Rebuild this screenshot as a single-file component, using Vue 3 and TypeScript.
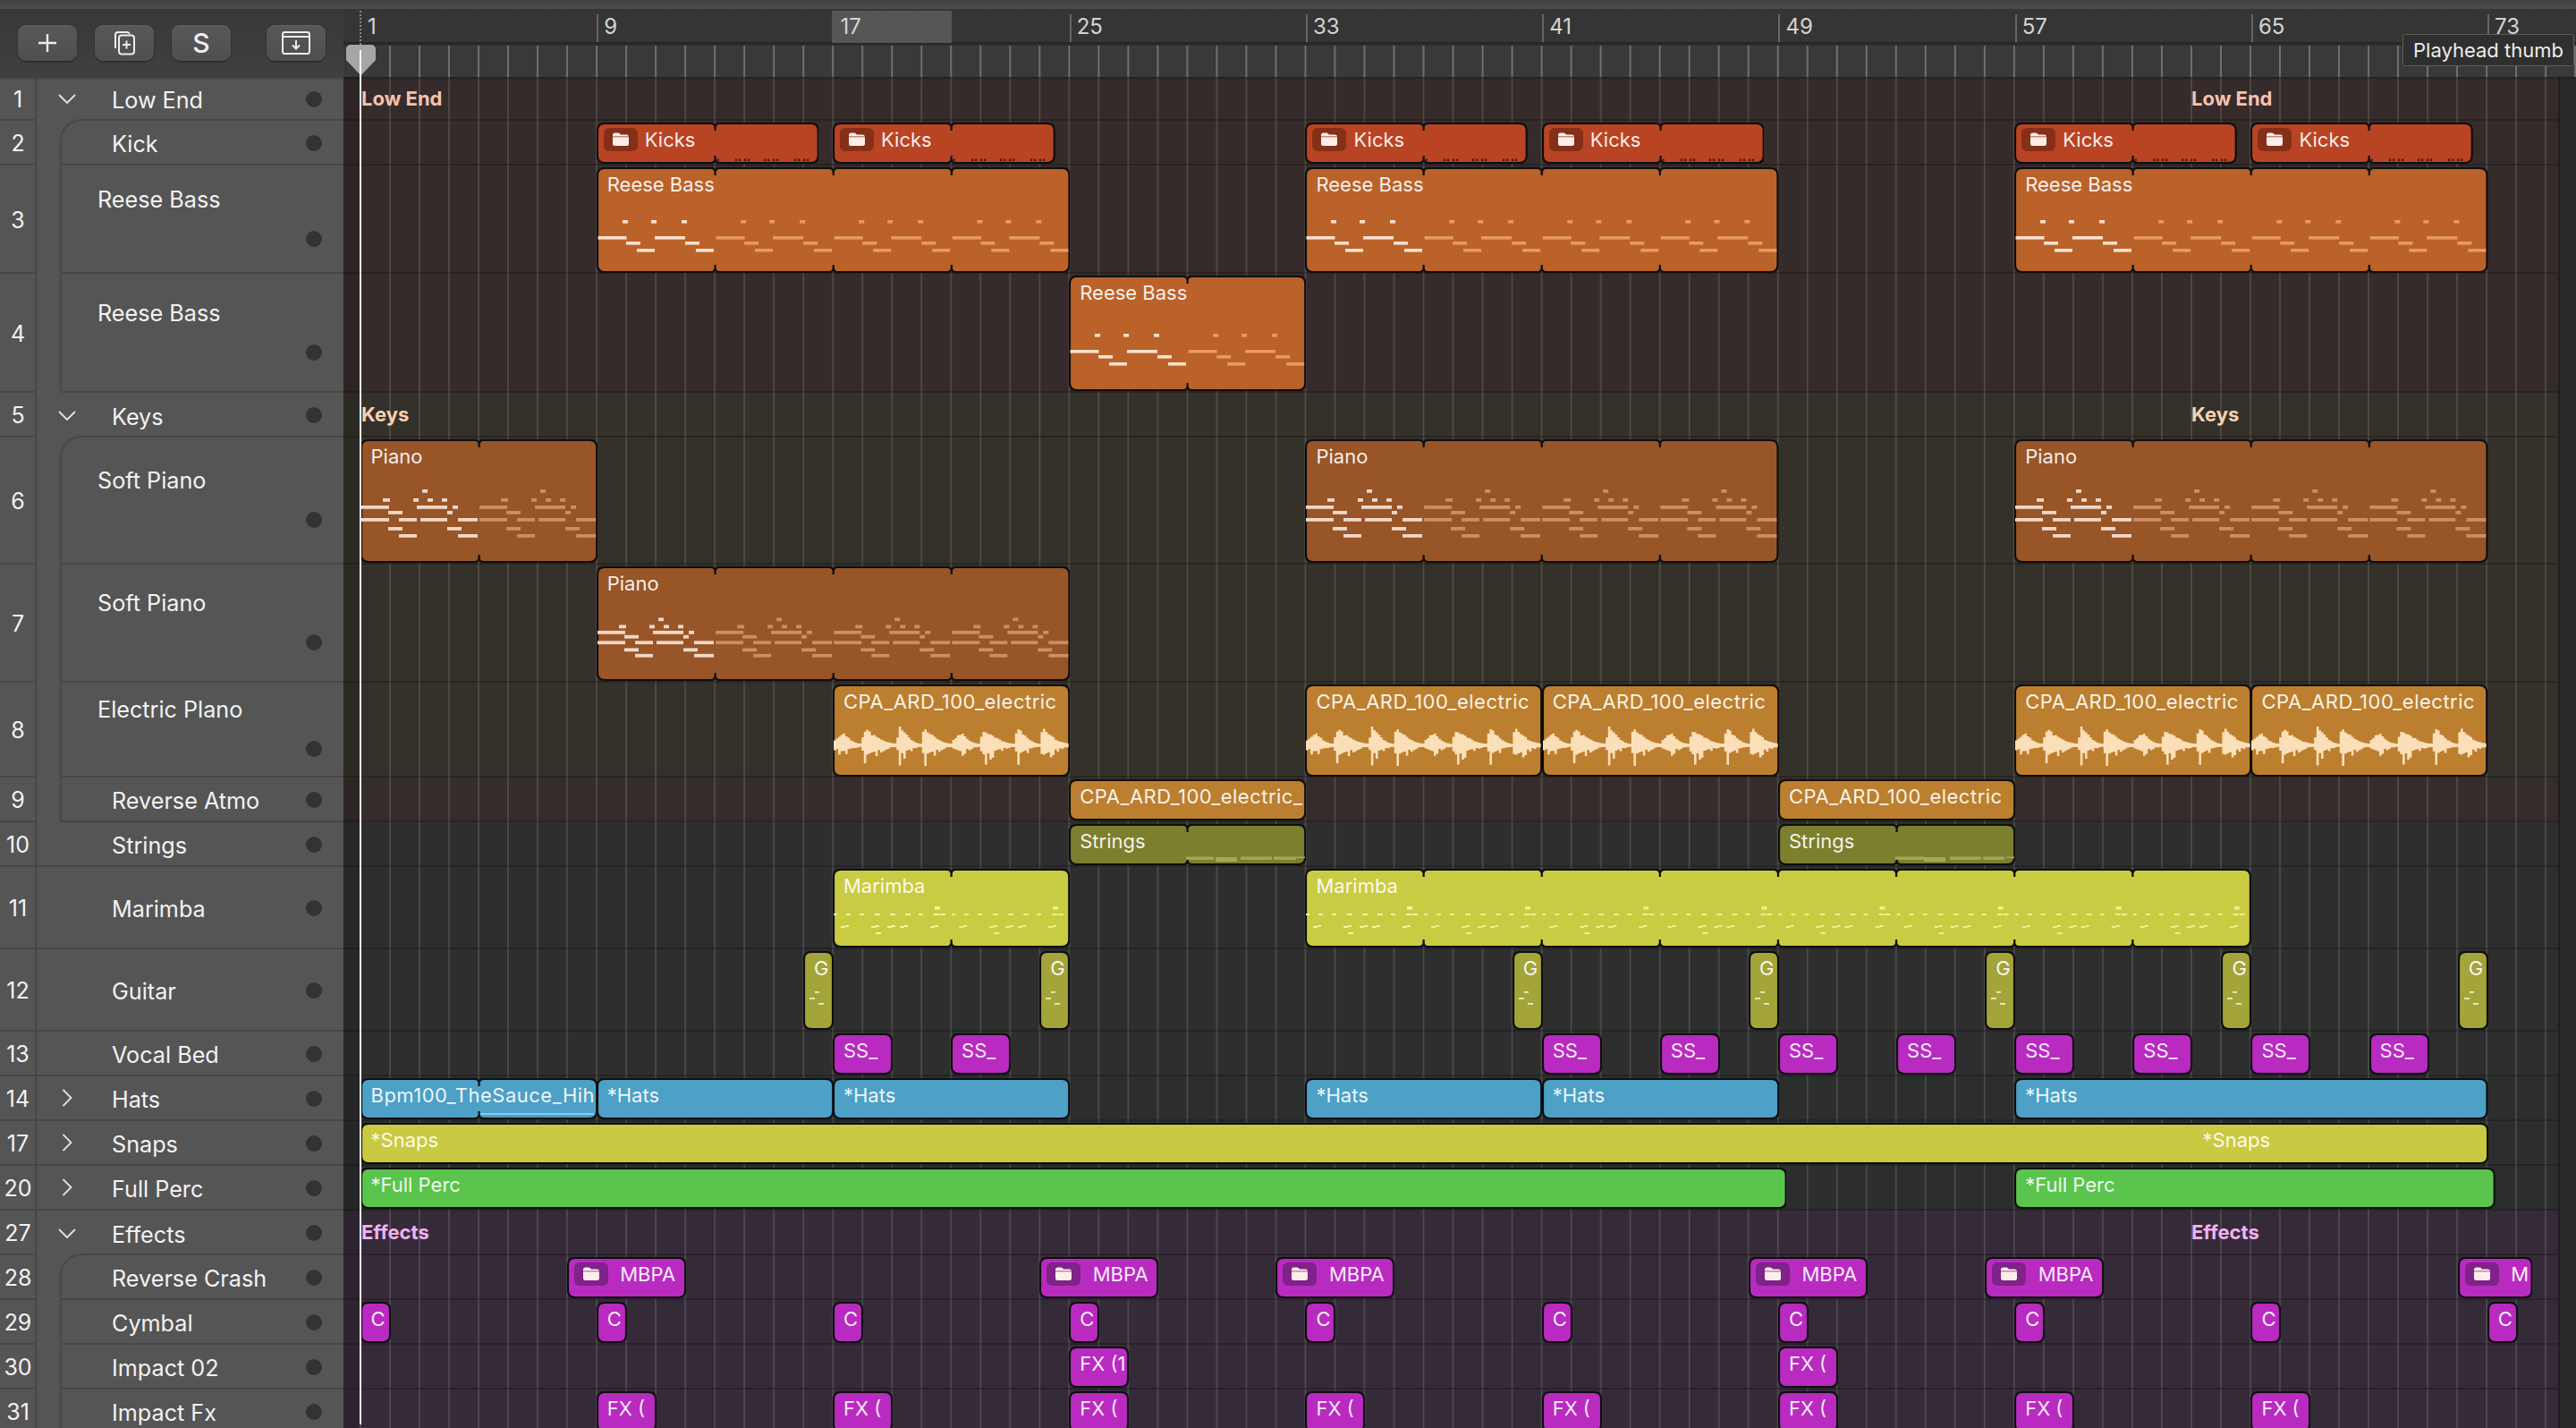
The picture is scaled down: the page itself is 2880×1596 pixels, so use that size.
<script setup lang="ts">
type Tint = 'low' | 'keys' | 'atmo' | 'plain' | 'mix' | 'fx'
type Kind = 'open' | 'closed' | 'plain' | 'first' | 'child' | 'tall' | 'tallFirst'

interface Note { x: number; y: number; w: number; h: number; c: string }
interface Region {
  left: number
  width: number
  height: number
  color: string
  label: string
  path: string
  notes: Note[]
  wave: string
  folder: string
  far: number
  key: string
}
interface GroupLabel { left: number; text: string }
interface Row {
  n: number
  name: string
  h: number
  kind: Kind
  tint: Tint
  regions: Region[]
  groups: GroupLabel[]
  labelColor: string
}

const BAR = 33.03
const ORIGIN = 19
const bx = (b: number): number => ORIGIN + (b - 1) * BAR

const C = {
  kick: '#b94424', bass: '#ba622a', piano: '#985528', cpa: '#bc7f2f', str: '#7c7f2e',
  mar: '#c9cb42', gtr: '#a3a43a', mag: '#b92bc0', hat: '#4da0c6', snap: '#c9ca42', perc: '#5bc44d',
}

function shape(w: number, h: number, joints: number[]): string {
  const r = 8
  let d = `M${r + 1} 1`
  for (const j of joints) d += `L${j - 5} 1Q${j} 1 ${j} 6L${j} 9L${j} 6Q${j} 1 ${j + 5} 1`
  d += `L${w - r - 1} 1Q${w - 1} 1 ${w - 1} ${r + 1}L${w - 1} ${h - r - 1}Q${w - 1} ${h - 1} ${w - r - 1} ${h - 1}`
  for (const j of [...joints].reverse()) d += `L${j + 5} ${h - 1}Q${j} ${h - 1} ${j} ${h - 6}L${j} ${h - 9}L${j} ${h - 6}Q${j} ${h - 1} ${j - 5} ${h - 1}`
  d += `L${r + 1} ${h - 1}Q1 ${h - 1} 1 ${h - r - 1}L1 ${r + 1}Q1 1 ${r + 1} 1Z`
  return d
}

type Raw = [number, number, number, number]
const seg = 132.12

function loop(src: Raw[], segs: number, first: string, rest: string, fy: (y: number) => number = (y) => y): Note[] {
  const out: Note[] = []
  for (let i = 0; i < segs; i++) {
    for (const [x, y, w, h] of src) {
      out.push({ x: x + i * seg, y: fy(y), w, h, c: i === 0 ? first : rest })
    }
  }
  return out
}

const bassSrc: Raw[] = [
  [29, 59, 6, 3.6], [61, 59, 6, 3.6], [95, 59, 6, 3.6],
  [1.5, 77, 32, 3.6], [65, 77, 34, 3.6],
  [33, 83, 16, 3.6], [99, 83, 16, 3.6],
  [45, 91, 20, 3.6], [111, 91, 20, 3.6],
]
const pianoSrc: Raw[] = [
  [69, 56, 6, 3.8],
  [25, 66, 8, 3.8], [59, 66, 6, 3.8], [75, 66, 6, 3.8], [91, 66, 6, 3.8],
  [1, 74, 31, 3.8], [63, 74, 34, 3.8], [103, 74, 6, 3.8],
  [31, 80, 16, 3.8], [97, 80, 6, 3.8],
  [1, 88, 31, 3.8], [43, 88, 20, 3.8], [67, 88, 30, 3.8], [109, 88, 22, 3.8],
  [31, 98, 16, 3.8], [97, 98, 16, 3.8],
  [43, 106, 20, 3.8], [109, 106, 22, 3.8],
]
const marimbaSrc: Raw[] = [
  [114, 42, 6, 3.6],
  [1, 50, 4, 2], [15, 50, 5, 2], [30, 50, 5, 2], [47, 50, 6, 2], [64, 50, 6, 2], [81, 50, 6, 2], [96, 50, 5, 2], [113, 50, 6, 2], [120, 50, 6, 2],
  [9, 64, 5, 2], [14, 63, 4, 2], [43, 64, 5, 2], [48, 63, 4, 2], [61, 64, 5, 2], [66, 63, 4, 2], [75, 64, 5, 2], [80, 63, 4, 2], [109, 64, 5, 2], [114, 63, 4, 2],
  [48, 71, 6, 2],
]
const kickDots: Note[] = [134.7, 155, 159, 165, 169, 187, 191, 197, 201, 221, 225, 231, 235]
  .map((x) => ({ x, y: 40.5, w: 2.2, h: 2.6, c: '#4a1a10' }))

function waveform(w: number, cy: number): string {
  // start, attack, length, top peak, bottom peak
  const peaks: [number, number, number, number, number][] = [
    [0, 9, 30, 13, 12], [30, 5, 40, 17, 22], [70, 2, 27, 22, 22], [97, 3, 35, 18, 23],
  ]
  const col = 2.6
  let d = ''
  let seed = 11
  const rnd = (): number => {
    seed = (seed * 9301 + 49297) % 233280
    return seed / 233280
  }
  for (let x = 1; x < w - 3; x += col) {
    const phase = (x - 1) % seg
    let best = peaks[0]
    for (const p of peaks) if (p[0] <= phase) best = p
    const dt = phase - best[0]
    const env = dt < best[1]
      ? 0.3 + 0.7 * (dt / best[1])
      : Math.pow(Math.max(0, 1 - (dt - best[1]) / (best[2] - best[1])), 1.9)
    const top = 1.8 + best[3] * env * (0.8 + rnd() * 0.25)
    const spike = rnd() > 0.6 ? 1 : 0.42
    const bot = 1.8 + best[4] * env * spike
    d += `M${x.toFixed(1)} ${(cy - top).toFixed(1)}h${col}V${(cy + bot).toFixed(1)}h-${col}Z`
  }
  return d
}

interface Opts { joints?: boolean; notes?: Note[]; wave?: boolean; folder?: string; far?: number }

function R(rowH: number, start: number, end: number, color: string, label: string, o: Opts = {}): Region {
  const left = bx(start) - 0.5
  const width = (end - start) * BAR + 1
  const height = rowH >= 100 && rowH <= 125 ? rowH - 3 : rowH - 4
  const joints: number[] = []
  if (o.joints) for (let b = start + 4; b < end - 0.01; b += 4) joints.push((b - start) * BAR + 0.5)
  return {
    left, width, height, color, label,
    path: shape(width, height, joints),
    notes: o.notes ?? [],
    wave: o.wave ? waveform(width, 68) : '',
    folder: o.folder ?? '',
    far: o.far ?? 0,
    key: `${start}-${end}-${label}`,
  }
}

const h = [49, 50, 121, 133, 50, 142, 132, 106, 50, 50, 92, 92, 50, 50, 50, 50, 50, 50, 50, 50, 50]

const kicks = (s: number): Region => R(h[1], s, s + 7.5, C.kick, 'Kicks', { joints: true, folder: '#852f19', notes: kickDots })
const bass = (s: number, e: number, off = 0): Region =>
  R(off ? h[3] : h[2], s, e, C.bass, 'Reese Bass', {
    joints: true,
    notes: loop(bassSrc, (e - s) / 4, '#fbe0cd', '#e89a60', (y) => y + off),
  })
const piano = (rowH: number, s: number, e: number, comp = false): Region =>
  R(rowH, s, e, C.piano, 'Piano', {
    joints: true,
    notes: loop(pianoSrc, (e - s) / 4, '#f0d8c8', '#c98f66', comp ? (y) => 12 + y * 0.81 : (y) => y),
  })
const cpa = (s: number): Region => R(h[7], s, s + 8, C.cpa, 'CPA_ARD_100_electric', { wave: true })
const mag = (rowH: number, s: number, e: number, label: string, o: Opts = {}): Region => R(rowH, s, e, C.mag, label, o)
const marimba = (s: number, e: number): Region =>
  R(h[10], s, e, C.mar, 'Marimba', { joints: true, notes: loop(marimbaSrc, (e - s) / 4, '#f4f59c', '#eef08a') })
const guitarNotes: Note[] = [
  { x: 13, y: 45, w: 5, h: 1.8, c: '#eeeebb' },
  { x: 7, y: 52, w: 6, h: 1.8, c: '#eeeebb' },
  { x: 17, y: 58, w: 6, h: 1.8, c: '#eeeebb' },
]
const stringsNotesA: Note[] = [
  [131, 36.5, 31, 3.4], [164, 37, 24, 5], [192, 36.5, 35, 3.4], [229, 36.5, 25, 3.4], [254, 36.5, 10, 1.6],
].map(([x, y, w, hh]) => ({ x, y, w, h: hh, c: '#a5a75a' }))
const stringsNotesB: Note[] = [
  [131, 36.5, 32, 3.4], [163, 37, 24, 5], [192, 36.5, 35, 3.4], [229, 36.5, 24, 3.4], [255, 36.5, 9, 1.6],
].map(([x, y, w, hh]) => ({ x, y, w, h: hh, c: '#a5a75a' }))

const rows: Row[] = [
  { n: 1, name: 'Low End', h: h[0], kind: 'open', tint: 'low', labelColor: '#f6c2af', groups: [{ left: 20, text: 'Low End' }, { left: 2066, text: 'Low End' }], regions: [] },
  { n: 2, name: 'Kick', h: h[1], kind: 'first', tint: 'low', labelColor: '', groups: [], regions: [9, 17, 33, 41, 57, 65].map(kicks) },
  { n: 3, name: 'Reese Bass', h: h[2], kind: 'tall', tint: 'low', labelColor: '', groups: [], regions: [bass(9, 25), bass(33, 49), bass(57, 73)] },
  { n: 4, name: 'Reese Bass', h: h[3], kind: 'tall', tint: 'low', labelColor: '', groups: [], regions: [bass(25, 33, 6)] },
  { n: 5, name: 'Keys', h: h[4], kind: 'open', tint: 'keys', labelColor: '#f6d2b0', groups: [{ left: 20, text: 'Keys' }, { left: 2066, text: 'Keys' }], regions: [] },
  { n: 6, name: 'Soft Piano', h: h[5], kind: 'tallFirst', tint: 'keys', labelColor: '', groups: [], regions: [piano(h[5], 1, 9), piano(h[5], 33, 49), piano(h[5], 57, 73)] },
  { n: 7, name: 'Soft Piano', h: h[6], kind: 'tall', tint: 'keys', labelColor: '', groups: [], regions: [piano(h[6], 9, 25, true)] },
  { n: 8, name: 'Electric Plano', h: h[7], kind: 'tall', tint: 'keys', labelColor: '', groups: [], regions: [17, 33, 41, 57, 65].map(cpa) },
  { n: 9, name: 'Reverse Atmo', h: h[8], kind: 'child', tint: 'atmo', labelColor: '', groups: [], regions: [R(h[8], 25, 33, C.cpa, 'CPA_ARD_100_electric_'), R(h[8], 49, 57, C.cpa, 'CPA_ARD_100_electric')] },
  { n: 10, name: 'Strings', h: h[9], kind: 'plain', tint: 'plain', labelColor: '', groups: [], regions: [R(h[9], 25, 33, C.str, 'Strings', { joints: true, notes: stringsNotesA }), R(h[9], 49, 57, C.str, 'Strings', { joints: true, notes: stringsNotesB })] },
  { n: 11, name: 'Marimba', h: h[10], kind: 'plain', tint: 'plain', labelColor: '', groups: [], regions: [marimba(17, 25), marimba(33, 65)] },
  { n: 12, name: 'Guitar', h: h[11], kind: 'plain', tint: 'plain', labelColor: '', groups: [], regions: [16, 24, 40, 48, 56, 64, 72].map((s) => R(h[11], s, s + 1, C.gtr, 'G', { notes: guitarNotes })) },
  { n: 13, name: 'Vocal Bed', h: h[12], kind: 'plain', tint: 'plain', labelColor: '', groups: [], regions: [17, 21, 41, 45, 49, 53, 57, 61, 65, 69].map((s) => mag(h[12], s, s + 2, 'SS_')) },
  { n: 14, name: 'Hats', h: h[13], kind: 'closed', tint: 'mix', labelColor: '', groups: [], regions: [
    R(h[13], 1, 9, C.hat, 'Bpm100_TheSauce_Hih', { joints: true, notes: [{ x: 134, y: 39, w: 127, h: 2, c: '#7dd0ef' }] }),
    R(h[13], 9, 17, C.hat, '*Hats'), R(h[13], 17, 25, C.hat, '*Hats'), R(h[13], 33, 41, C.hat, '*Hats'), R(h[13], 41, 49, C.hat, '*Hats'), R(h[13], 57, 73, C.hat, '*Hats'),
  ] },
  { n: 17, name: 'Snaps', h: h[14], kind: 'closed', tint: 'mix', labelColor: '', groups: [], regions: [R(h[14], 1, 73, C.snap, '*Snaps', { far: 2060 })] },
  { n: 20, name: 'Full Perc', h: h[15], kind: 'closed', tint: 'mix', labelColor: '', groups: [], regions: [R(h[15], 1, 49.25, C.perc, '*Full Perc'), R(h[15], 57, 73.25, C.perc, '*Full Perc')] },
  { n: 27, name: 'Effects', h: h[16], kind: 'open', tint: 'fx', labelColor: '#efb2f2', groups: [{ left: 20, text: 'Effects' }, { left: 2066, text: 'Effects' }], regions: [] },
  { n: 28, name: 'Reverse Crash', h: h[17], kind: 'first', tint: 'fx', labelColor: '', groups: [], regions: [
    ...[8, 24, 32, 48, 56].map((s) => mag(h[17], s, s + 4, 'MBPA', { folder: '#7f2289' })),
    mag(h[17], 72, 74.5, 'M', { folder: '#7f2289' }),
  ] },
  { n: 29, name: 'Cymbal', h: h[18], kind: 'child', tint: 'fx', labelColor: '', groups: [], regions: [1, 9, 17, 25, 33, 41, 49, 57, 65, 73].map((s) => mag(h[18], s, s + 1, 'C')) },
  { n: 30, name: 'Impact 02', h: h[19], kind: 'child', tint: 'fx', labelColor: '', groups: [], regions: [mag(h[19], 25, 27, 'FX (1'), mag(h[19], 49, 51, 'FX (')] },
  { n: 31, name: 'Impact Fx', h: h[20], kind: 'child', tint: 'fx', labelColor: '', groups: [], regions: [9, 17, 25, 33, 41, 49, 57, 65].map((s) => mag(h[20], s, s + 2, 'FX (')) },
]

const rulerBars = ['1', '9', '17', '25', '33', '41', '49', '57', '65', '73']
</script>

<template>
  <div class="app">
    <div class="topbar"></div>

    <div class="head">
      <div class="tools">
        <button class="tool" type="button">
          <svg width="24" height="24" viewBox="0 0 24 24"><path d="M12 2V22M2 12H22" class="ico" /></svg>
        </button>
        <button class="tool" type="button">
          <svg width="30" height="30" viewBox="0 0 30 30">
            <path d="M5 21V6a3 3 0 0 1 3-3h10a3 3 0 0 1 2.8 2" class="ico thin" />
            <rect x="9" y="6.500" width="17" height="21" rx="3" class="ico thin" />
            <path d="M17.500 12.500V21.500M13 17H22" class="ico thin" />
          </svg>
        </button>
        <button class="tool s" type="button">S</button>
        <button class="tool push" type="button">
          <svg width="34" height="28" viewBox="0 0 34 28">
            <rect x="2" y="2" width="30" height="24" rx="2.500" class="ico thin" />
            <path d="M2 7H32" class="ico thin" />
            <path d="M17 11V20M13 16.500L17 20.500L21 16.500" class="ico thin" />
          </svg>
        </button>
      </div>
      <div class="ruler">
        <div class="bars">
          <div v-for="b in rulerBars" :key="b" class="bar" :class="{ first: b === '1' }">
            <div v-if="b === '17'" class="bar-hl"></div>
            <span class="bar-num">{{ b }}</span>
          </div>
        </div>
        <div class="ticks"></div>
      </div>
    </div>

    <div class="tracks">
      <div v-for="r in rows" :key="r.n" class="row" :style="{ height: r.h + 'px' }">
        <div class="num"><span class="num-text">{{ r.n }}</span></div>
        <div class="side" :class="'k-' + r.kind">
          <span v-if="r.kind === 'open'" class="chev">
            <svg width="20" height="11" viewBox="0 0 20 11"><path d="M1 1L10 10L19 1" class="chev-line" /></svg>
          </span>
          <span v-else-if="r.kind === 'closed'" class="chev">
            <svg width="12" height="20" viewBox="0 0 12 20"><path d="M1.500 1L10.500 10L1.500 19" class="chev-line" /></svg>
          </span>
          <template v-if="r.kind.startsWith('tall')">
            <div class="tall-box">
              <span class="name tall-name">{{ r.name }}</span>
              <span class="tall-dot"><i class="dot"></i></span>
            </div>
          </template>
          <template v-else>
            <span class="name">{{ r.name }}</span>
            <i class="dot row-dot"></i>
          </template>
        </div>
        <div class="lane" :class="'t-' + r.tint">
          <span v-for="g in r.groups" :key="g.left" class="group" :style="{ left: g.left + 'px', color: r.labelColor }">{{ g.text }}</span>
          <div
            v-for="reg in r.regions"
            :key="reg.key"
            class="region"
            :style="{ left: reg.left + 'px', width: reg.width + 'px', height: reg.height + 'px' }"
          >
            <svg class="shape" :width="reg.width" :height="reg.height">
              <path :d="reg.path" :fill="reg.color" class="outline" />
              <rect v-for="(n, i) in reg.notes" :key="i" :x="n.x" :y="n.y" :width="n.w" :height="n.h" :fill="n.c" />
              <path v-if="reg.wave" :d="reg.wave" fill="#fbdfb8" />
            </svg>
            <div class="caption" :class="{ long: reg.label.length > 10 }">
              <span v-if="reg.folder" class="pill" :class="{ wide: reg.label !== 'Kicks' }" :style="{ background: reg.folder }">
                <svg width="18" height="15" viewBox="0 0 18 15">
                  <path d="M0 3a2.500 2.500 0 0 1 2.500-2.500H6c.8 0 1.300.3 1.800.8L9 2.500H15.500A2.500 2.500 0 0 1 18 4.500H0Z" class="fold" />
                  <path d="M0 5.300H18V12.500A2.500 2.500 0 0 1 15.500 15H2.500A2.500 2.500 0 0 1 0 12.500Z" class="fold" />
                </svg>
              </span>
              <span class="cap-text">{{ reg.label }}</span>
            </div>
            <span v-if="reg.far" class="far" :style="{ left: reg.far + 'px' }">{{ reg.label }}</span>
          </div>
        </div>
      </div>
    </div>

    <svg class="loop-l" width="18" height="28" viewBox="0 0 18 28"><path d="M0 0H7L17 14L7 28H0Z" /></svg>
    <svg class="loop-r" width="18" height="28" viewBox="0 0 18 28"><path d="M18 0H10L1 14L10 28H18Z" /></svg>
    <div class="dash"></div>
    <div class="playhead"></div>
    <svg class="thumb" width="35" height="35" viewBox="0 0 35 35"><path d="M6 0H29a5 5 0 0 1 5 5V17L17.500 34.500L1 17V5a5 5 0 0 1 5-5Z" /></svg>
    <div class="tip">Playhead thumb</div>
  </div>
</template>

<style scoped>
.app {
  position: relative;
  width: 2880px;
  height: 1596px;
  overflow: hidden;
  background: #2d2d2d;
  font-family: Inter, "Liberation Sans", sans-serif;
  color: #f2f2f2;
}
.topbar {
  height: 10px;
  background: linear-gradient(#424242, #4c4c4c);
}
.head {
  display: flex;
  height: 76px;
  box-shadow: 0 2px 2px rgba(0, 0, 0, 0.25);
  position: relative;
  z-index: 2;
}
.tools {
  width: 384px;
  flex: none;
  display: flex;
  align-items: center;
  gap: 20px;
  padding-left: 20px;
  box-sizing: border-box;
  background: linear-gradient(#383838, #404040);
}
.tool {
  width: 66px;
  height: 40px;
  padding: 0;
  border: 0;
  border-radius: 9px;
  background: linear-gradient(#585858, #4f4f4f);
  box-shadow: 0 1px 2px rgba(0, 0, 0, 0.45), inset 0 1px 0 rgba(255, 255, 255, 0.05);
  display: flex;
  align-items: center;
  justify-content: center;
  color: #eee;
  font-family: inherit;
}
.tool.s {
  font-size: 30px;
  font-weight: 500;
}
.tool.push {
  margin-left: 20px;
}
.ico {
  fill: none;
  stroke: #ececec;
  stroke-width: 2.4;
}
.ico.thin {
  stroke-width: 2;
}
.ruler {
  flex: 1;
  display: flex;
  flex-direction: column;
  position: relative;
}
.bars {
  height: 39px;
  display: flex;
  padding-left: 19px;
  background: #353535;
  box-sizing: border-box;
  border-bottom: 2px solid #262626;
}
.bar {
  width: 264.24px;
  flex: none;
  position: relative;
  padding-left: 6px;
  box-sizing: border-box;
  font-size: 24px;
  line-height: 36px;
  color: #d4d4d4;
  border-left: 2px solid #666;
  margin-top: 6px;
  height: 31px;
}
.bar.first {
  border-left-color: transparent;
}
.bar-num {
  position: relative;
  top: -4px;
}
.bar-hl {
  position: absolute;
  left: -3px;
  top: -4px;
  width: 134px;
  height: 36px;
  background: #565656;
}
.ticks {
  flex: 1;
  margin-top: 2px;
  background-color: #393939;
  background-image: linear-gradient(90deg, #707070 2px, transparent 2px);
  background-size: 33.03px 100%;
  background-position: 18px 0;
}
.tracks {
  display: flex;
  flex-direction: column;
}
.row {
  display: flex;
  flex: none;
  background: #555;
}
.num {
  width: 41px;
  flex: none;
  box-sizing: border-box;
  background: #555;
  border-right: 2px solid #474747;
  border-bottom: 2px solid #474747;
  display: flex;
  align-items: center;
  justify-content: center;
  font-size: 25px;
  padding-left: 1px;
}
.num-text {
  position: relative;
  top: 1px;
}
.side {
  width: 343px;
  flex: none;
  box-sizing: border-box;
  background: #555;
  display: flex;
  align-items: center;
  padding-left: 84px;
  padding-right: 24px;
  position: relative;
  justify-content: space-between;
}
.k-closed,
.k-plain {
  border-bottom: 2px solid #474747;
}
.k-first,
.k-child,
.k-tall,
.k-tallFirst {
  margin-left: 26px;
  width: 317px;
  padding-left: 56px;
  border-left: 2px solid #474747;
  border-bottom: 2px solid #474747;
}
.k-first,
.k-tallFirst {
  margin-top: -2px;
  border-top: 2px solid #474747;
  border-top-left-radius: 24px;
}
.k-tall,
.k-tallFirst {
  padding-left: 40px;
  align-items: center;
}
.chev {
  position: absolute;
  left: 22px;
  width: 24px;
  height: 24px;
  display: flex;
  align-items: center;
  justify-content: center;
}
.chev-line {
  fill: none;
  stroke: #e4e4e4;
  stroke-width: 1.800;
}
.name {
  font-size: 25.200px;
  line-height: 26px;
  padding-top: 3px;
  white-space: nowrap;
}
.name.tall-name {
  padding-top: 0;
}
.dot {
  display: block;
  width: 18px;
  height: 18px;
  border-radius: 50%;
  background: #333;
  flex: none;
}
.k-first .row-dot,
.k-child .row-dot,
.k-plain .row-dot,
.k-closed .row-dot {
  position: relative;
  top: 1px;
}
.tall-box {
  flex: 1;
  display: flex;
  flex-direction: column;
  gap: 18px;
}
.tall-dot {
  height: 26px;
  display: flex;
  align-items: center;
  justify-content: flex-end;
}
.lane {
  flex: 1;
  position: relative;
  box-sizing: border-box;
  border-bottom: 2px solid rgba(0, 0, 0, 0.2);
  background-image: linear-gradient(90deg, rgba(255, 255, 255, 0.125) 2px, transparent 2px);
  background-size: 33.03px 100%;
  background-position: 18px 0;
}
.lane::before {
  content: "";
  position: absolute;
  left: 0;
  top: 0;
  bottom: -2px;
  width: 18px;
  background: rgba(0, 0, 0, 0.14);
}
.lane::after {
  content: "";
  position: absolute;
  right: 0;
  top: 0;
  bottom: -2px;
  width: 18px;
  background: #292929;
  border-left: 2px solid #1f1f1f;
}
.t-low {
  background-color: #352b2a;
}
.t-keys {
  background-color: #34302a;
}
.t-atmo {
  background-color: #342d2b;
}
.t-plain {
  background-color: #2e2e2e;
}
.t-mix {
  background-color: #2c2e2d;
}
.t-fx {
  background-color: #352a38;
}
.group {
  position: absolute;
  top: 0;
  bottom: 0;
  display: flex;
  align-items: center;
  font-size: 22px;
  font-weight: 700;
}
.region {
  position: absolute;
  top: 1.500px;
  overflow: hidden;
}
.shape {
  position: absolute;
  left: 0;
  top: 0;
  display: block;
}
.outline {
  stroke: #0e0e0e;
  stroke-width: 2.2;
}
.caption {
  position: absolute;
  left: 0;
  top: 0;
  right: 0;
  height: 38px;
  display: flex;
  align-items: center;
  padding-left: 12px;
  overflow: hidden;
  white-space: nowrap;
  font-size: 22px;
  color: rgba(255, 255, 255, 0.92);
}
.caption.long {
  letter-spacing: 0.5px;
}
.pill {
  flex: none;
  width: 38px;
  height: 26px;
  border-radius: 6px;
  margin-left: -4px;
  margin-right: 8px;
  display: flex;
  align-items: center;
  justify-content: center;
}
.pill.wide {
  margin-right: 13.500px;
}
.fold {
  fill: #fdeeea;
}
.far {
  position: absolute;
  top: 0;
  height: 38px;
  display: flex;
  align-items: center;
  font-size: 22px;
  color: rgba(255, 255, 255, 0.92);
}
.loop-l {
  position: absolute;
  left: 384px;
  top: 13px;
  fill: #4c4c4c;
}
.loop-r {
  position: absolute;
  left: 2862px;
  top: 14px;
  fill: #4c4c4c;
}
.dash {
  position: absolute;
  left: 402px;
  top: 12px;
  height: 38px;
  width: 2px;
  background-image: linear-gradient(#8a8a8a 2px, transparent 2px);
  background-size: 2px 4px;
  z-index: 3;
}
.playhead {
  position: absolute;
  left: 402px;
  top: 56px;
  width: 2px;
  height: 1536px;
  background: #fff;
  z-index: 5;
}
.thumb {
  position: absolute;
  left: 386px;
  top: 50px;
  fill: #a6a6a6;
  z-index: 4;
}
.tip {
  position: absolute;
  left: 2686px;
  top: 38px;
  width: 192px;
  height: 36px;
  box-sizing: border-box;
  background: #2f2f2f;
  border: 1.500px solid #5c5c5c;
  border-radius: 2px;
  display: flex;
  align-items: center;
  justify-content: center;
  font-size: 22px;
  color: #ececec;
  z-index: 6;
  white-space: nowrap;
}
</style>

<style>
html,
body {
  margin: 0;
  background: #2d2d2d;
}
</style>
